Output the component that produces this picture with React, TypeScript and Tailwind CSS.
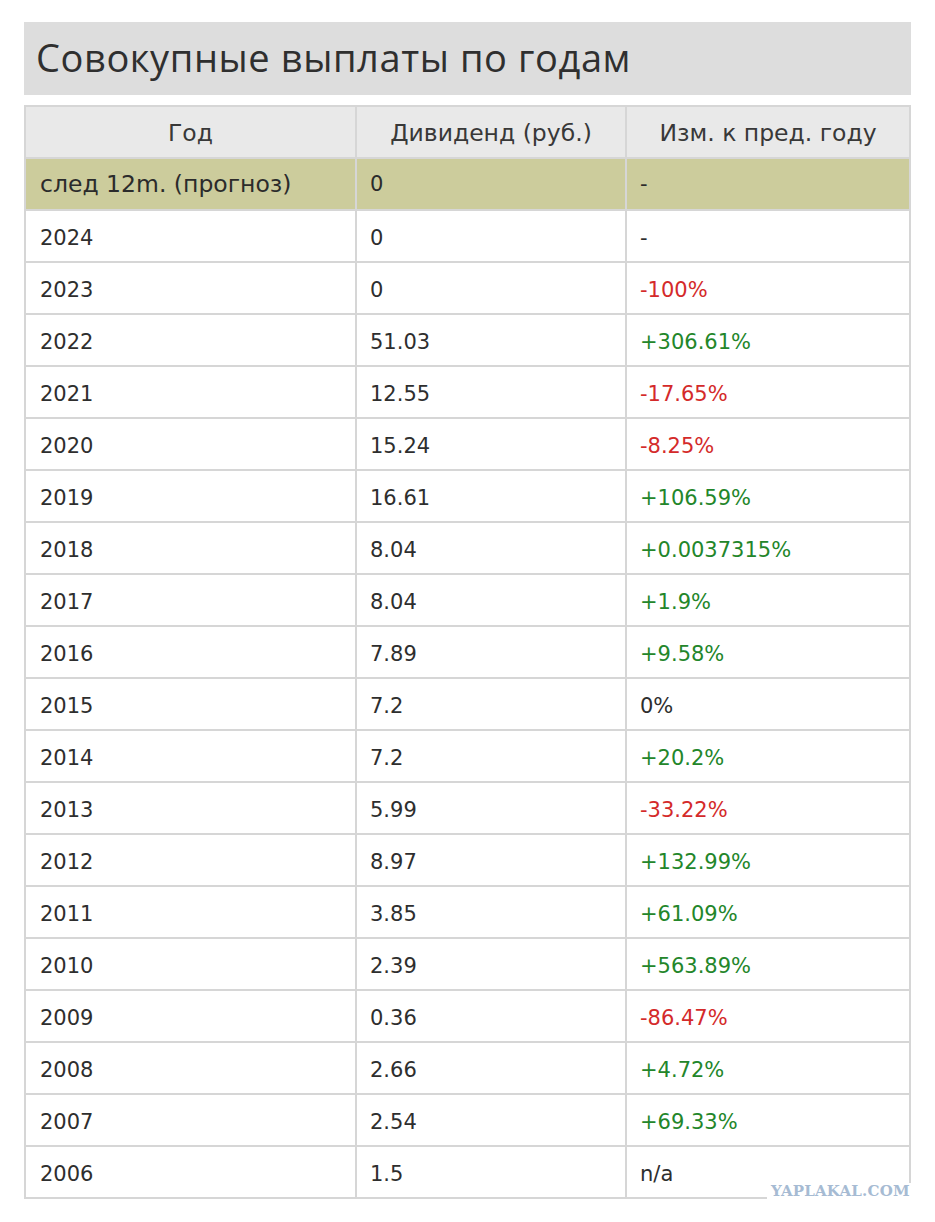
import React from "react";

type Row = { y: string; d: string; c: string; t: "red" | "green" | "none" };

const rows: Row[] = [
  { y: "2024", d: "0", c: "-", t: "none" },
  { y: "2023", d: "0", c: "-100%", t: "red" },
  { y: "2022", d: "51.03", c: "+306.61%", t: "green" },
  { y: "2021", d: "12.55", c: "-17.65%", t: "red" },
  { y: "2020", d: "15.24", c: "-8.25%", t: "red" },
  { y: "2019", d: "16.61", c: "+106.59%", t: "green" },
  { y: "2018", d: "8.04", c: "+0.0037315%", t: "green" },
  { y: "2017", d: "8.04", c: "+1.9%", t: "green" },
  { y: "2016", d: "7.89", c: "+9.58%", t: "green" },
  { y: "2015", d: "7.2", c: "0%", t: "none" },
  { y: "2014", d: "7.2", c: "+20.2%", t: "green" },
  { y: "2013", d: "5.99", c: "-33.22%", t: "red" },
  { y: "2012", d: "8.97", c: "+132.99%", t: "green" },
  { y: "2011", d: "3.85", c: "+61.09%", t: "green" },
  { y: "2010", d: "2.39", c: "+563.89%", t: "green" },
  { y: "2009", d: "0.36", c: "-86.47%", t: "red" },
  { y: "2008", d: "2.66", c: "+4.72%", t: "green" },
  { y: "2007", d: "2.54", c: "+69.33%", t: "green" },
  { y: "2006", d: "1.5", c: "n/a", t: "none" },
];

const colorCls = (t: Row["t"]) =>
  t === "red" ? "text-[#d42a2a]" : t === "green" ? "text-[#23862a]" : "text-[#2e2e2e]";

export default function App() {
  return (
    <div
      className="w-[935px] h-[1222px] bg-white pt-[22px] px-[24px] relative"
      style={{ fontFamily: '"DejaVu Sans", "Open Sans", sans-serif' }}
    >
      <div className="w-[887px] h-[73px] bg-[#dddddd] flex items-center pl-[12px] pb-[3px]">
        <h1
          className="text-[38px] text-[#2f2f2f] font-normal tracking-[0.6px] leading-none"
          style={{ fontFamily: '"Open Sans", sans-serif' }}
        >
          Совокупные выплаты по годам
        </h1>
      </div>
      <div className="mt-[10px] w-[887px] border-t-2 border-l-2 border-[#d6d6d6]">
        <div className="grid grid-cols-[331px_270px_284px] h-[52px] bg-[#e9e9e9] text-[#383838] text-[23.5px]">
          <div className="border-r-2 border-b-2 border-[#d6d6d6] flex items-center justify-center pt-[3px]">Год</div>
          <div className="border-r-2 border-b-2 border-[#d6d6d6] flex items-center justify-center pt-[3px]">Дивиденд (руб.)</div>
          <div className="border-r-2 border-b-2 border-[#d6d6d6] flex items-center justify-center pt-[3px]">Изм. к пред. году</div>
        </div>
        <div className="grid grid-cols-[331px_270px_284px] h-[52px] bg-[#cccc9c] text-[#2b2b2b] text-[21px]">
          <div className="border-r-2 border-b-2 border-[#d6d6d6] flex items-center pl-[14px] pt-[2px] text-[23.5px]">след 12m. (прогноз)</div>
          <div className="border-r-2 border-b-2 border-[#d6d6d6] flex items-center pl-[13px] pt-[2px]">0</div>
          <div className="border-r-2 border-b-2 border-[#d6d6d6] flex items-center pl-[13px] pt-[2px]">-</div>
        </div>
        {rows.map((r) => (
          <div key={r.y} className="grid grid-cols-[331px_270px_284px] h-[52px] bg-white text-[#2e2e2e] text-[21px]">
            <div className="border-r-2 border-b-2 border-[#d6d6d6] flex items-center pl-[14px] pt-[5px]">{r.y}</div>
            <div className="border-r-2 border-b-2 border-[#d6d6d6] flex items-center pl-[13px] pt-[5px]">{r.d}</div>
            <div className={`border-r-2 border-b-2 border-[#d6d6d6] flex items-center pl-[13px] pt-[5px] ${colorCls(r.t)}`}>{r.c}</div>
          </div>
        ))}
      </div>
      <div
        className="absolute left-[767px] top-[1183px] bg-white pl-[4px] pr-[3px] text-[15px] leading-[16px] font-bold text-[#a6bbd3] tracking-[0.2px]"
        style={{ fontFamily: '"DejaVu Serif", serif' }}
      >
        YAPLAKAL.COM
      </div>
    </div>
  );
}
